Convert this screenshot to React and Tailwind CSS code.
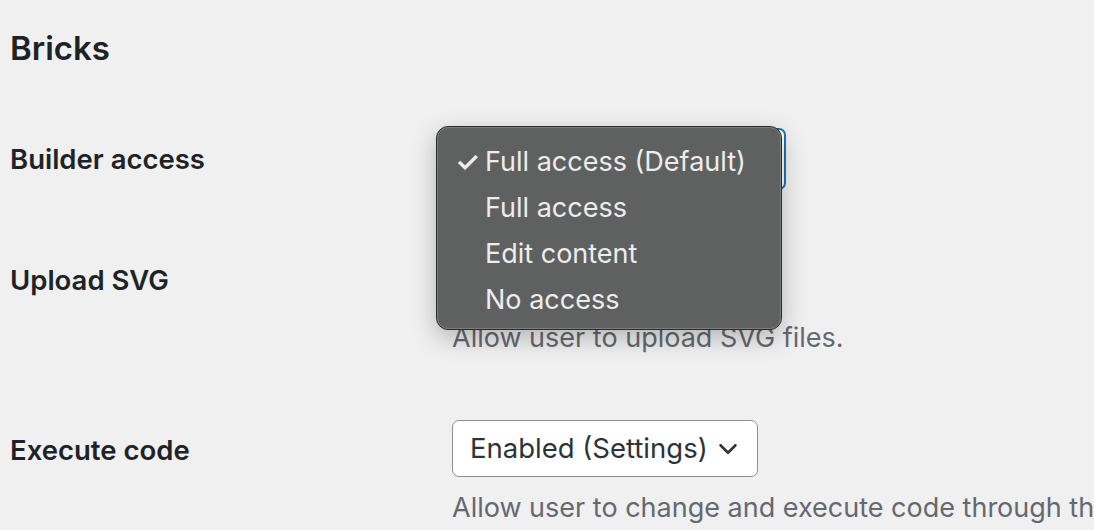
import { ChevronDown } from "lucide-react";

const font = { fontFamily: "Inter, 'Noto Sans', sans-serif" };

function Select({ value, focused, width }) {
  return (
    <div
      className={`flex items-center justify-between bg-white rounded-[7px] pl-[17px] pr-[14px] text-[27.5px] text-[#2c3338] ${
        focused
          ? "h-[62px] border-2 border-[#2271b1]"
          : "h-[57px] border border-[#8c8f94]"
      } ${width}`}
    >
      <span>{value}</span>
      <ChevronDown size={30} strokeWidth={2} className="text-[#2c3338]" />
    </div>
  );
}

export default function App() {
  const options = ["Full access (Default)", "Full access", "Edit content", "No access"];

  return (
    <div
      className="relative h-[530px] w-[1094px] overflow-hidden bg-[#f0f0f1] pl-[10px] pt-[28px] text-[#1d2327]"
      style={font}
    >
      <h2 className="text-[33px] leading-[40px] font-semibold">Bricks</h2>

      {/* Builder access */}
      <div className="mt-[60px] flex items-center">
        <div className="w-[442px] shrink-0 text-[27.5px] leading-[32px] font-semibold">Builder access</div>
        <Select value="Full access (Default)" focused width="w-[334px]" />
      </div>

      {/* Upload SVG */}
      <div className="mt-[74px] flex items-start">
        <div className="w-[442px] shrink-0 text-[27.5px] leading-[32px] font-semibold">Upload SVG</div>
        <div className="flex flex-col">
          <div className="h-[32px] flex items-center">
            <div className="h-[28px] w-[28px] rounded-[5px] border border-[#8c8f94] bg-white" />
          </div>
          <p className="mt-[26px] whitespace-nowrap text-[27px] leading-[32px] text-[#646970]">
            Allow user to upload SVG files.
          </p>
        </div>
      </div>

      {/* Execute code */}
      <div className="mt-[66px] flex items-start">
        <div className="w-[442px] shrink-0 h-[57px] flex items-center pt-[2px] text-[27.5px] leading-[32px] font-semibold">
          Execute code
        </div>
        <div className="flex flex-col">
          <Select value="Enabled (Settings)" width="w-[306px]" />
          <p className="mt-[15px] whitespace-nowrap text-[27px] leading-[32px] text-[#646970]">
            Allow user to change and execute code through the builder.
          </p>
        </div>
      </div>

      {/* open dropdown menu */}
      <div className="absolute left-[436px] top-[126px] h-[204px] w-[346px] rounded-[12px] border border-[#2b2b2b] bg-[#5f6060] shadow-[0_8px_24px_rgba(0,0,0,0.25)]">
        <div className="h-full w-full rounded-[11px] border border-[#7b7c7c] pt-[11px]">
          {options.map((o, i) => (
            <div key={o} className="flex h-[46px] items-center text-[27px] leading-[46px] text-[#ededed]">
              <span className="w-[47px] pl-[17px] text-[28px] font-semibold">{i === 0 ? "✓" : ""}</span>
              <span>{o}</span>
            </div>
          ))}
        </div>
      </div>
    </div>
  );
}
